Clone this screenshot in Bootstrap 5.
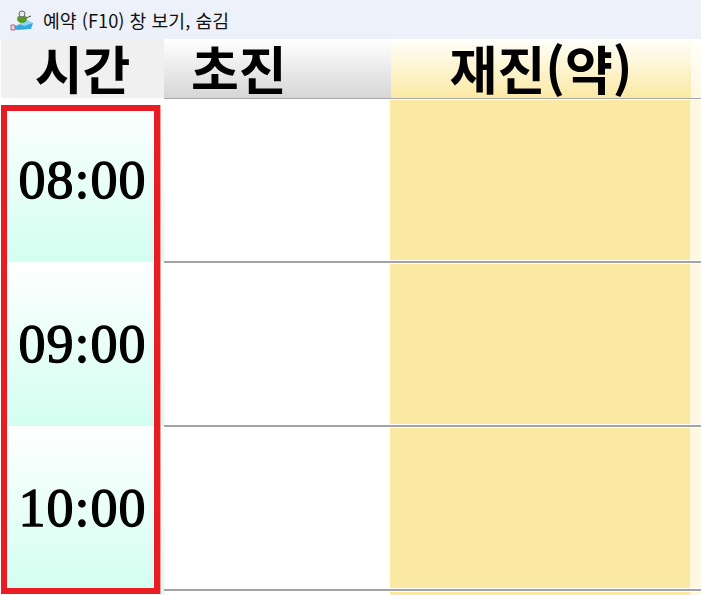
<!DOCTYPE html>
<html lang="ko"><head><meta charset="utf-8"><title>예약</title>
<link rel="stylesheet" href="https://cdn.jsdelivr.net/npm/bootstrap@5.3.0/dist/css/bootstrap.min.css">
<style>
html,body{margin:0;height:595px;overflow:hidden;background:#fff}
.board{width:701px;height:595px;position:relative;overflow:hidden}
.titlebar{height:39px;background:#edf1f9;padding-left:10px;gap:8px;font:18.3px "Noto Sans CJK KR","Noto Sans",sans-serif;color:#111}
.titlebar svg{width:25px;height:22px;flex:none}
.sheet{display:grid;grid-template-columns:163px 226px 300px 11px;grid-template-rows:60px 164px 164px 164px 4px;padding-left:1px;width:701px}
.cell-h{font-family:"Noto Sans CJK KR",sans-serif;font-weight:700;font-size:52px;line-height:57px;color:#000;overflow:visible;white-space:nowrap}
.h-time{background:#f0f0f0;text-align:center;height:59px}
.h-new{background:linear-gradient(#fff,#d6d6d6);padding-left:27px;margin-right:-1px;box-shadow:0 1px 0 #a8a8a8;height:59px}
.h-re{background:linear-gradient(#fffffb,#fbe9a3);text-align:center;box-shadow:0 1px 0 #a8a8a8;height:59px;margin-left:1px;margin-right:-1px}
.h-more{background:linear-gradient(#fffffb,#fff8e0);box-shadow:0 1px 0 #a8a8a8;height:59px;margin-left:1px}
.slot-time{background:linear-gradient(#fff,#d3fff0);font-family:"Liberation Serif",serif;font-weight:400;font-size:54px;color:#000;-webkit-text-stroke:1.3px #000;letter-spacing:1px;margin-top:-1px;margin-bottom:1px}
.slot-new,.slot-re,.slot-more{border-bottom:2px solid #a3a3a3;box-shadow:inset 0 -1px 0 #fff,inset 0 1px 0 #fff}
.slot-new{background:#fff}
.slot-re{background:#fbe9a3}
.slot-more{background:#fff8e0}
.tail-time{background:#d3fff0;margin-top:-1px}
.tail-re{background:#fbe9a3;box-shadow:inset 0 1px 0 #fff}
.tail-more{background:#fff8e0;box-shadow:inset 0 1px 0 #fff}
.frame{position:absolute;left:1px;top:105px;width:159px;height:489px;border:6px solid #e91c24;box-shadow:1px 0 0 #f6a0a0}
</style></head><body>
<div class="board">
<div class="titlebar d-flex align-items-center">
<svg viewBox="0 0 25 22" aria-hidden="true">
<path d="M3 18l12-5 8 1-2 6-14 1z" fill="#38a8e0"/>
<path d="M9 15l9-4 5 3-9 3z" fill="#8fd6f5"/>
<ellipse cx="12" cy="10" rx="5" ry="4" fill="#5a9a2a"/>
<circle cx="12" cy="5" r="3" fill="#e9e9e9" stroke="#666" stroke-width="1"/>
<path d="M1 16h4v5H1z" fill="#f3d3de" stroke="#9a4a6a" stroke-width=".8"/>
<path d="M16 9l5-2" stroke="#555" stroke-width="1"/>
</svg>
<span>예약 (F10) 창 보기, 숨김</span>
</div>
<div class="sheet">
<div class="cell-h h-time">시간</div><div class="cell-h h-new">초진</div><div class="cell-h h-re">재진(약)</div><div class="cell-h h-more"></div>
<div class="slot-time d-flex align-items-center justify-content-center">08:00</div><div class="slot-new"></div><div class="slot-re"></div><div class="slot-more"></div>
<div class="slot-time d-flex align-items-center justify-content-center">09:00</div><div class="slot-new"></div><div class="slot-re"></div><div class="slot-more"></div>
<div class="slot-time d-flex align-items-center justify-content-center">10:00</div><div class="slot-new"></div><div class="slot-re"></div><div class="slot-more"></div>
<div class="tail-time"></div><div></div><div class="tail-re"></div><div class="tail-more"></div>
</div>
<div class="frame"></div>
</div>
<script src="https://cdn.jsdelivr.net/npm/bootstrap@5.3.0/dist/js/bootstrap.bundle.min.js"></script>
</body></html>
